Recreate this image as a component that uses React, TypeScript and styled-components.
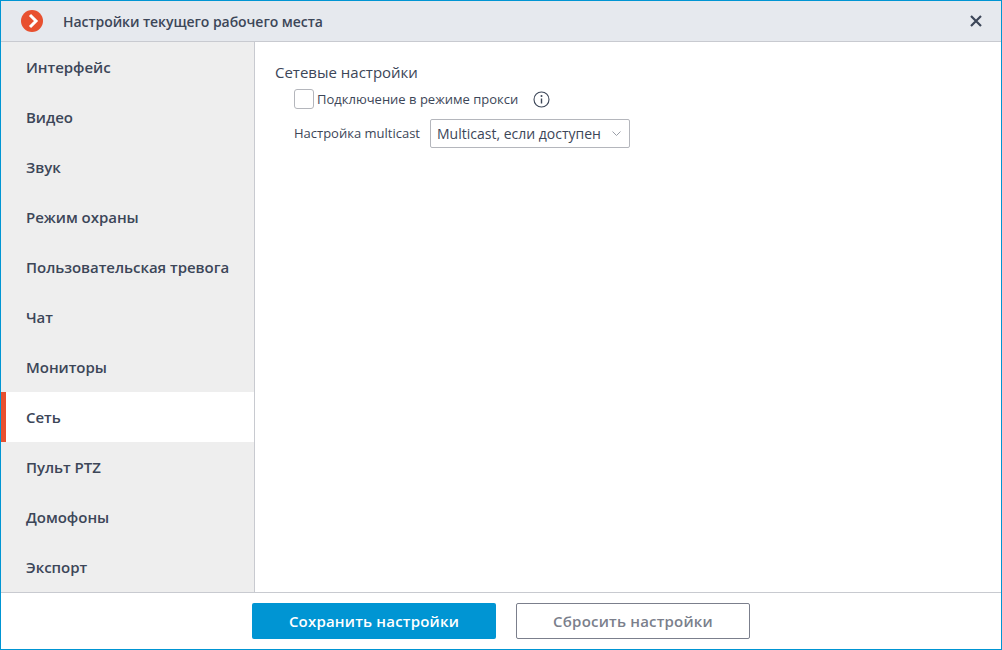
import React from "react";
import styled, { createGlobalStyle } from "styled-components";

const Global = createGlobalStyle`
  html, body { margin: 0; padding: 0; background: #fff; }
  body { font-family: "Open Sans", "Liberation Sans", sans-serif; }
  * { box-sizing: border-box; }
`;

const Window = styled.div`
  width: 1002px;
  height: 650px;
  border: 1px solid #0095d3;
  display: flex;
  flex-direction: column;
  background: #fff;
`;

const TitleBar = styled.header`
  height: 41px;
  flex: none;
  display: flex;
  align-items: center;
  padding: 0 19px 0 20px;
  background: #e6e9ee;
  border-bottom: 1px solid #c8cad0;
`;

const Title = styled.h1`
  flex: 1;
  margin: 0 0 0 20px;
  font-size: 14px;
  font-weight: 600;
  letter-spacing: -0.06px;
  color: #3c4658;
`;

const Body = styled.div`
  flex: 1;
  display: flex;
  min-height: 0;
`;

const Sidebar = styled.nav`
  width: 254px;
  flex: none;
  background: #eeeeee;
  border-right: 1px solid #c8cad0;
`;

const NavItem = styled.div<{ $active?: boolean }>`
  height: 50px;
  display: flex;
  align-items: center;
  padding-left: ${(p) => (p.$active ? 20 : 25)}px;
  font-size: 15px;
  font-weight: 600;
  letter-spacing: -0.04px;
  color: #3c4658;
  background: ${(p) => (p.$active ? "#fff" : "transparent")};
  border-left: ${(p) => (p.$active ? "5px solid #e8502f" : "none")};
`;

const Content = styled.main`
  flex: 1;
  padding: 20px 20px;
  color: #3c4658;
`;

const SectionTitle = styled.div`
  font-size: 15px;
  line-height: 20px;
`;

const CheckRow = styled.div`
  display: flex;
  align-items: center;
  margin: 7px 0 0 19px;
  height: 20px;
  font-size: 13px;
`;

const CheckBox = styled.span`
  width: 20px;
  height: 20px;
  margin-right: 3px;
  border: 1px solid #b4b6bc;
  border-radius: 3px;
  background: #fff;
`;

const InfoIcon = styled.svg`
  margin-left: 15px;
`;

const SelectRow = styled.div`
  display: flex;
  align-items: center;
  margin: 10px 0 0 19px;
  font-size: 13px;
`;

const SelectLabel = styled.span`
  line-height: 18px;
  margin-bottom: 1px;
`;

const Select = styled.div`
  width: 200px;
  height: 29px;
  margin-left: 10px;
  padding: 0 8px 0 6px;
  display: flex;
  align-items: center;
  justify-content: space-between;
  border: 1px solid #b4b6bc;
  border-radius: 2px;
  font-size: 14px;
  background: #fff;
`;

const Footer = styled.footer`
  height: 57px;
  flex: none;
  display: flex;
  justify-content: center;
  align-items: flex-start;
  gap: 20px;
  padding: 10px 0 0 0;
  border-top: 1px solid #c8cad0;
`;

const Button = styled.button<{ $primary?: boolean }>`
  width: ${(p) => (p.$primary ? 244 : 234)}px;
  height: 36px;
  border-radius: 2px;
  font-family: inherit;
  font-size: 15px;
  font-weight: 600;
  letter-spacing: 0.2px;
  color: ${(p) => (p.$primary ? "#fff" : "#7b7f8c")};
  background: ${(p) => (p.$primary ? "#0095d3" : "#fff")};
  border: ${(p) => (p.$primary ? "none" : "1px solid #7b7f8c")};
`;

const items = ["Интерфейс", "Видео", "Звук", "Режим охраны", "Пользовательская тревога", "Чат", "Мониторы", "Сеть", "Пульт PTZ", "Домофоны", "Экспорт"];

export default function App() {
  return (
    <>
      <Global />
      <Window>
        <TitleBar>
          <svg width="22" height="22" viewBox="0 0 22 22">
            <circle cx="11" cy="11" r="11" fill="#e8502f" />
            <path d="M9 5 L15 11 L9 17" fill="none" stroke="#fff" strokeWidth="3" />
          </svg>
          <Title>Настройки текущего рабочего места</Title>
          <svg width="12" height="12" viewBox="0 0 12 12">
            <path d="M1 1 L11 11 M11 1 L1 11" stroke="#3c4658" strokeWidth="2.2" />
          </svg>
        </TitleBar>
        <Body>
          <Sidebar>
            {items.map((t) => (
              <NavItem key={t} $active={t === "Сеть"}>{t}</NavItem>
            ))}
          </Sidebar>
          <Content>
            <SectionTitle>Сетевые настройки</SectionTitle>
            <CheckRow>
              <CheckBox />
              Подключение в режиме прокси
              <InfoIcon width="17" height="17" viewBox="0 0 17 17">
                <circle cx="8.5" cy="8.5" r="7.5" fill="none" stroke="#3c4658" strokeWidth="1.1" />
                <path d="M8.5 7.5 V12.5" stroke="#3c4658" strokeWidth="1.4" />
                <circle cx="8.5" cy="5" r="1" fill="#3c4658" />
              </InfoIcon>
            </CheckRow>
            <SelectRow>
              <SelectLabel>Настройка multicast</SelectLabel>
              <Select>
                Multicast, если доступен
                <svg width="9" height="5" viewBox="0 0 9 5">
                  <path d="M0.5 0.5 L4.5 4.5 L8.5 0.5" fill="none" stroke="#9a9ea8" strokeWidth="1" />
                </svg>
              </Select>
            </SelectRow>
          </Content>
        </Body>
        <Footer>
          <Button $primary>Сохранить настройки</Button>
          <Button>Сбросить настройки</Button>
        </Footer>
      </Window>
    </>
  );
}
